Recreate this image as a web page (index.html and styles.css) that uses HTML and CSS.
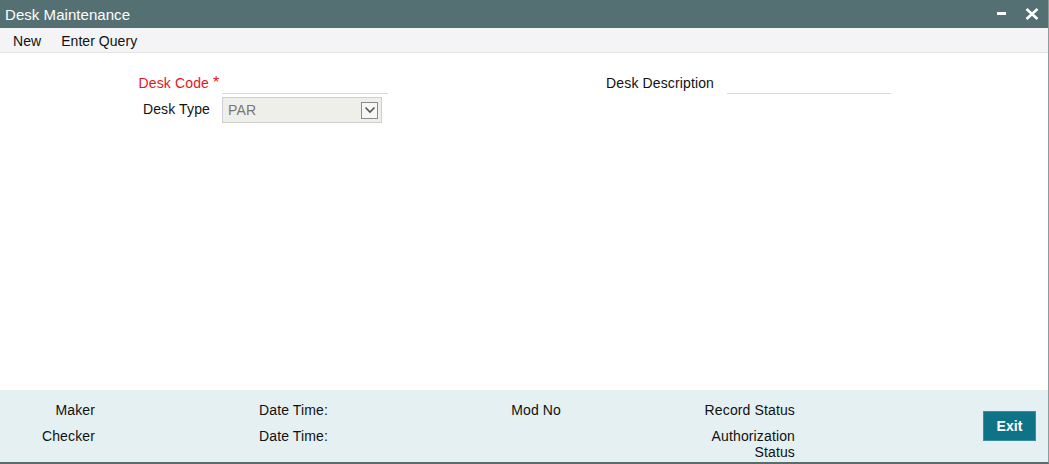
FILE: index.html
```html
<!DOCTYPE html>
<html>
<head>
<meta charset="utf-8">
<link rel="stylesheet" href="styles.css">
</head>
<body>
<div class="app">
  <div class="titlebar">
    <span class="title">Desk Maintenance</span>
    <div class="winbtns">
      <svg class="min" width="10" height="4" viewBox="0 0 10 4"><rect x="0" y="0" width="9" height="3" fill="#fff"/></svg>
      <svg class="close" width="14" height="12" viewBox="0 0 14 12"><path d="M1.5 1 L12.5 11 M12.5 1 L1.5 11" stroke="#fff" stroke-width="2.6" stroke-linecap="butt"/></svg>
    </div>
  </div>
  <div class="toolbar">
    <span class="tool">New</span>
    <span class="tool">Enter Query</span>
  </div>
  <div class="form">
    <div class="grid">
      <div class="lbl req">Desk Code</div>
      <div class="star">*</div>
      <div class="inp"></div>
      <div class="spacer"></div>
      <div class="lbl">Desk Description</div>
      <div class="star"></div>
      <div class="inp"></div>

      <div class="lbl lbl-sel">Desk Type</div>
      <div class="star"></div>
      <div class="select">
        <span class="selval">PAR</span>
        <span class="arrow"><svg width="14" height="14" viewBox="0 0 14 14"><path d="M2.5 4.5 L7 9 L11.5 4.5" fill="none" stroke="#555" stroke-width="1.6"/></svg></span>
      </div>
    </div>
  </div>
  <div class="footer">
    <div class="audit">
      <div class="flbl">Maker</div><div></div>
      <div class="flbl">Date Time:</div><div></div>
      <div class="flbl">Mod No</div><div></div>
      <div class="flbl">Record Status</div>

      <div class="flbl">Checker</div><div></div>
      <div class="flbl">Date Time:</div><div></div>
      <div class="flbl"></div><div></div>
      <div class="flbl">Authorization<br>Status</div>
    </div>
    <button class="exit">Exit</button>
  </div>
</div>
</body>
</html>
```
FILE: styles.css
```css
* { box-sizing: border-box; }
html, body { margin: 0; padding: 0; background: #fff; }
body {
  font-family: "Liberation Sans", Arial, sans-serif;
  font-size: 14px;
  letter-spacing: 0.13px;
  color: #111;
  width: 1049px;
  height: 464px;
  overflow: hidden;
}
.app {
  width: 1049px;
  height: 464px;
  display: flex;
  flex-direction: column;
  border-right: 1px solid #8d9c9d;
  border-bottom: 2px solid #5a6b6c;
}
.titlebar {
  height: 28px;
  flex: none;
  background: #557073;
  color: #fff;
  display: flex;
  align-items: center;
  justify-content: space-between;
  padding-left: 5px;
}
.title { font-size: 15px; letter-spacing: 0.05px; }
.winbtns {
  display: flex;
  align-items: center;
  height: 28px;
}
.min { display: block; margin-right: 18px; }
.close { display: block; margin-right: 9px; }
.toolbar {
  height: 25px;
  flex: none;
  background: #f4f4f6;
  border-bottom: 1px solid #e4e4e6;
  display: flex;
  align-items: center;
  padding-left: 13px;
  padding-top: 2px;
  gap: 20px;
}
.tool { color: #111; letter-spacing: 0.05px; }
.form {
  flex: 1;
  padding-top: 17px;
}
.grid {
  display: grid;
  grid-template-columns: 209px 13px 166px 202px 124px 13px 164px;
  grid-template-rows: 24px 26px;
  row-gap: 3px;
}
.lbl {
  text-align: right;
  align-self: center;
  padding-top: 1px;
}
.lbl-sel { padding-top: 0; padding-bottom: 3px; margin-right: -1px; }
.req { color: #e8141c; }
.star {
  color: #e8141c;
  font-size: 16px;
  padding-left: 4px;
  line-height: 14px;
  padding-top: 6px;
}
.inp {
  border-bottom: 1px solid #d8d8d8;
}
.select {
  width: 160px;
  height: 26px;
  background: #efefea;
  border: 1px solid #cfcfcf;
  display: flex;
  align-items: center;
  justify-content: space-between;
  padding-left: 5px;
  padding-right: 3px;
}
.selval { color: #777; }
.arrow {
  width: 17px;
  height: 17px;
  border: 1px solid #8a8a8a;
  background: #f6f6f6;
  display: flex;
  align-items: center;
  justify-content: center;
}
.arrow svg { display: block; }
.footer {
  height: 72px;
  flex: none;
  background: #e4f0f2;
  display: flex;
  justify-content: space-between;
  padding-top: 12px;
}
.audit {
  display: grid;
  grid-template-columns: 95px 138px 95px 138px 95px 138px 96px;
  grid-auto-rows: auto;
  row-gap: 10px;
  align-content: start;
}
.flbl {
  text-align: right;
  line-height: 16px;
}
.exit {
  margin-top: 9px;
  margin-right: 12px;
  width: 53px;
  height: 30px;
  background: #0f7387;
  border: 1px solid #3b8e9d;
  color: #fff;
  font-family: "Liberation Sans", Arial, sans-serif;
  font-weight: bold;
  font-size: 14px;
  letter-spacing: 0.1px;
  padding: 0;
}
```
